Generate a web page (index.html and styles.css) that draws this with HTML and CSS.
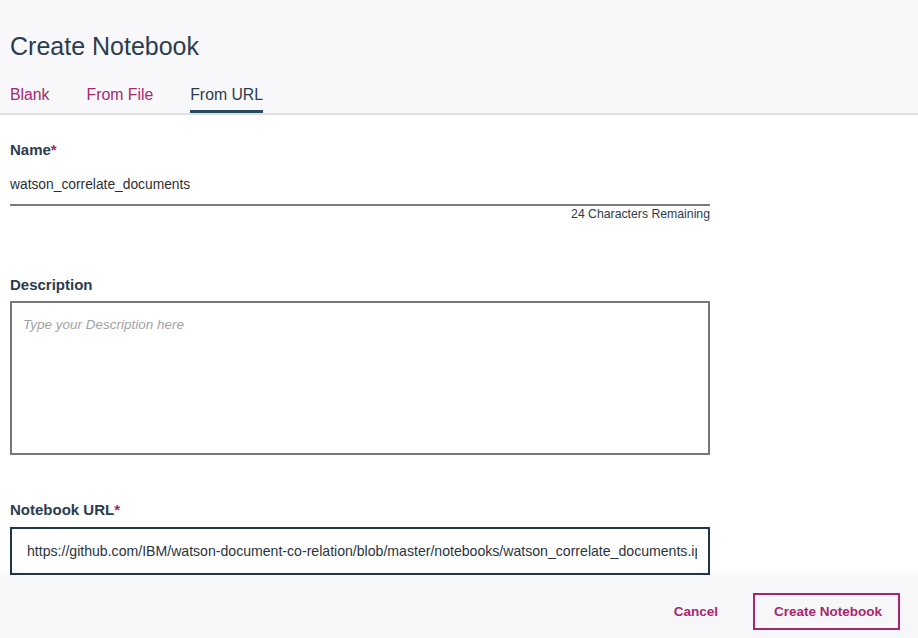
FILE: index.html
```html
<!DOCTYPE html>
<html>
<head>
<meta charset="utf-8">
<link rel="stylesheet" href="styles.css">
</head>
<body>
<div class="page">
  <header class="header">
    <h1 class="title">Create Notebook</h1>
    <nav class="tabs">
      <span class="tab">Blank</span>
      <span class="tab">From File</span>
      <span class="tab active">From URL</span>
    </nav>
  </header>
  <main class="main">
    <div class="form">
      <div class="label">Name<span class="req">*</span></div>
      <div class="line-input">watson_correlate_documents</div>
      <div class="counter">24 Characters Remaining</div>

      <div class="label desc-label">Description</div>
      <div class="textarea"><span class="placeholder">Type your Description here</span></div>

      <div class="label url-label">Notebook URL<span class="req">*</span></div>
      <div class="url-box"><div class="url-text">https://github.com/IBM/watson-document-co-relation/blob/master/notebooks/watson_correlate_documents.ipynb</div></div>
    </div>
  </main>
  <footer class="footer">
    <span class="cancel">Cancel</span>
    <span class="btn">Create Notebook</span>
  </footer>
</div>
</body>
</html>
```

FILE: styles.css
```css
html, body {
  margin: 0;
  padding: 0;
  height: 100%;
}
body {
  font-family: "Liberation Sans", Arial, sans-serif;
  color: #2c3d4f;
  background: #ffffff;
  overflow: hidden;
}
.page {
  height: 638px;
  display: flex;
  flex-direction: column;
}
.header {
  background: #f8f8fa;
  padding: 30px 10px 0;
  border-bottom: 2px solid #e0e0e2;
  height: 83px;
}
.title {
  margin: 0;
  font-size: 25px;
  line-height: 32px;
  font-weight: 400;
  color: #2b3c4e;
}
.tabs {
  display: flex;
  gap: 37px;
  margin-top: 23px;
}
.tab {
  font-size: 15.8px;
  line-height: 20px;
  padding-bottom: 5px;
  border-bottom: 3px solid transparent;
  color: #a6286f;
}
.tab.active {
  color: #2b3c4e;
  border-bottom-color: #264a62;
}
.main {
  flex: 1;
  overflow: hidden;
  padding: 25px 10px 0;
}
.form {
  width: 700px;
  display: flex;
  flex-direction: column;
}
.label {
  font-size: 15px;
  line-height: 20px;
  font-weight: 700;
  color: #2b3c4e;
}
.req {
  color: #a6266e;
}
.line-input {
  margin-top: 15px;
  font-size: 13.8px;
  line-height: 20px;
  padding-bottom: 9px;
  border-bottom: 2px solid #7a7a7a;
  color: #2c3036;
}
.counter {
  align-self: flex-end;
  font-size: 12.25px;
  line-height: 16px;
  color: #2b3c4e;
}
.desc-label {
  margin-top: 53px;
}
.textarea {
  margin-top: 6px;
  height: 126px;
  border: 2px solid #777777;
  padding: 12px 11px;
}
.placeholder {
  font-size: 13.5px;
  line-height: 18px;
  font-style: italic;
  color: #a3a3a3;
}
.url-label {
  margin-top: 45px;
}
.url-box {
  margin-top: 7px;
  height: 44px;
  border: 2px solid #1f374c;
  padding: 0 11px 0 15px;
}
.url-text {
  font-size: 14.1px;
  line-height: 44px;
  white-space: nowrap;
  overflow: hidden;
  color: #2a3440;
}
.footer {
  height: 62px;
  flex: none;
  background: #f7f7f9;
  box-shadow: 0 -3px 8px rgba(0, 0, 0, 0.04);
  display: flex;
  justify-content: flex-end;
  align-items: flex-start;
  gap: 35px;
  padding: 17px 18px 0 0;
  box-sizing: border-box;
  position: relative;
}
.cancel {
  font-size: 13.5px;
  font-weight: 700;
  line-height: 37px;
  color: #a6266e;
  white-space: nowrap;
}
.btn {
  font-size: 13.5px;
  font-weight: 700;
  line-height: 33px;
  color: #a6266e;
  border: 2px solid #a6266e;
  padding: 0 19px;
  white-space: nowrap;
  box-sizing: border-box;
  width: 147px;
  text-align: center;
}
```
